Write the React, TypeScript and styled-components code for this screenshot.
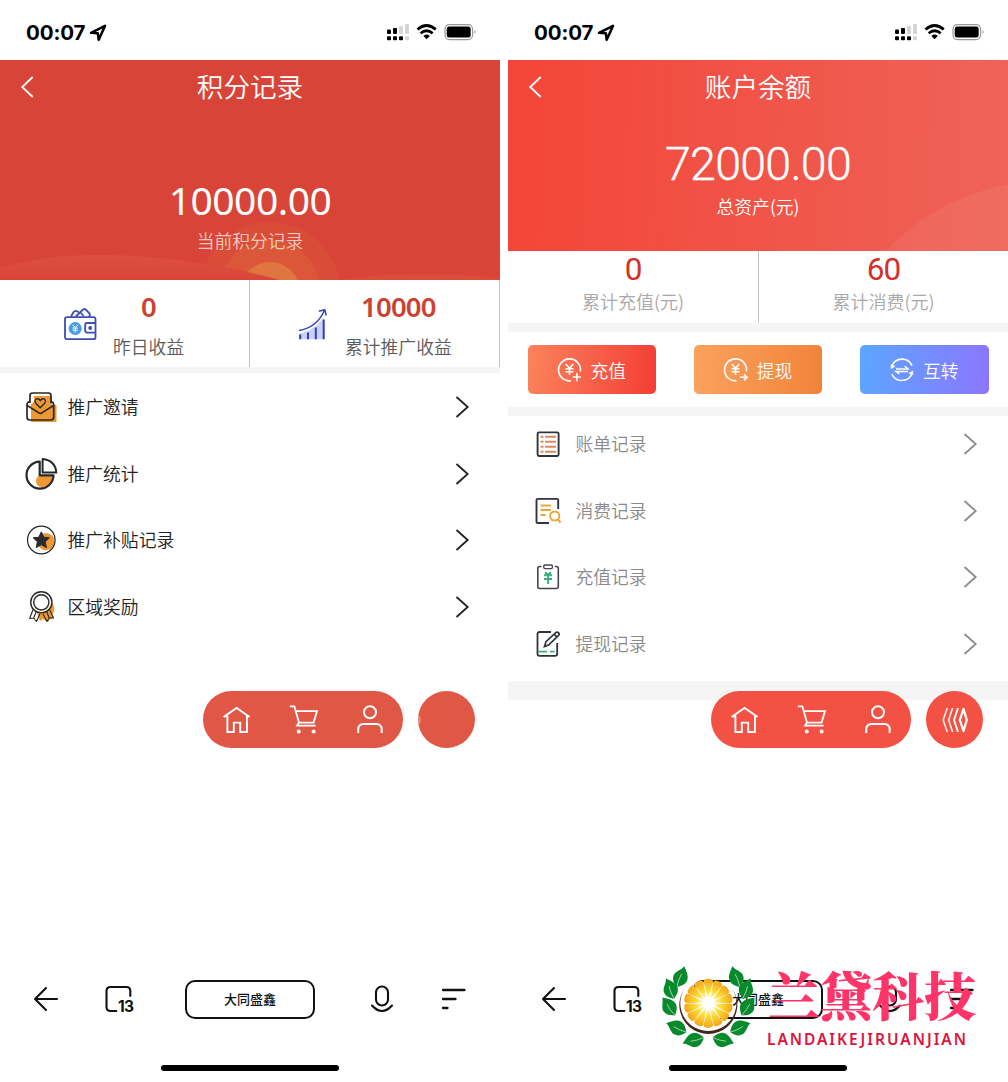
import React from "react";
import styled, { createGlobalStyle } from "styled-components";

const GlobalStyle = createGlobalStyle`
  * { box-sizing: border-box; }
  body {
    margin: 0;
    background: #fff;
    font-family: "Noto Sans CJK SC", "Liberation Sans", sans-serif;
  }
  svg { display: block; flex: none; }
`;

const Stage = styled.main`
  display: grid;
  grid-template-columns: 500px 500px;
  column-gap: 8px;
  width: 1008px;
  height: 1082px;
  overflow: hidden;
  background: #fff;
`;

const Phone = styled.section`
  position: relative;
  display: flex;
  flex-direction: column;
  height: 1082px;
`;

/* ---------- status bar ---------- */

const StatusBar = styled.div`
  display: flex;
  align-items: center;
  height: 60px;
  padding: 5px 23px 0 26px;
`;

const Clock = styled.span`
  font: 700 20.5px/24px Inter, "Liberation Sans", sans-serif;
  width: 60px;
  margin-right: 3px;
  letter-spacing: -0.1px;
  color: #000;
`;

const Spacer = styled.span`
  flex: 1;
`;

/* ---------- hero ---------- */

const Hero = styled.header<{ $h: number; $bg: string }>`
  position: relative;
  display: flex;
  flex-direction: column;
  align-items: center;
  height: ${(p) => p.$h}px;
  background: ${(p) => p.$bg};
  color: #fff;
`;

const HeroArt = styled.svg`
  position: absolute;
  inset: 0;
`;

const TitleRow = styled.div`
  position: relative;
  display: grid;
  grid-template-columns: 60px 1fr 60px;
  align-items: center;
  width: 100%;
  height: 54px;
`;

const Title = styled.h1`
  margin: 0;
  padding-bottom: 2px;
  text-align: center;
  font-size: 26.6px;
  line-height: 38px;
  font-weight: 350;
`;

const BackSlot = styled.span`
  padding-left: 20px;
`;

const Amount = styled.div<{ $top: number; $size: number; $spacing: number; $font: string; $weight: number; $stroke?: number }>`
  position: relative;
  margin-top: ${(p) => p.$top}px;
  font-family: ${(p) => p.$font};
  font-weight: ${(p) => p.$weight};
  font-size: ${(p) => p.$size}px;
  line-height: 50px;
  letter-spacing: ${(p) => p.$spacing}px;
  -webkit-text-stroke: ${(p) => p.$stroke ?? 0}px #fff;
`;

const AmountLabel = styled.div<{ $top: number; $dim?: boolean }>`
  position: relative;
  margin-top: ${(p) => p.$top}px;
  font-size: 17.8px;
  line-height: 26px;
  font-weight: 350;
  color: ${(p) => (p.$dim ? "#f6c9be" : "#fff")};
`;

/* ---------- stats ---------- */

const Stats = styled.div<{ $h: number }>`
  display: grid;
  grid-template-columns: 1fr 1fr;
  height: ${(p) => p.$h}px;
`;

const IconStat = styled.div<{ $pad: number; $gap: number }>`
  display: flex;
  align-items: flex-start;
  gap: ${(p) => p.$gap}px;
  padding-left: ${(p) => p.$pad}px;
  border-right: 1px solid #c4c4c4;
  svg { margin-top: 26px; }
`;

const StatText = styled.div`
  display: flex;
  flex-direction: column;
  align-items: center;
  padding-top: 11px;
`;

const StatValue = styled.strong`
  font: 600 27.5px/32px "Noto Sans", sans-serif;
  letter-spacing: -0.8px;
  color: #cb4234;
`;

const StatLabel = styled.span`
  margin-top: 10px;
  font-size: 17.8px;
  line-height: 26px;
  font-weight: 350;
  color: #5a5a5a;
`;

const PlainStat = styled.div`
  display: flex;
  flex-direction: column;
  align-items: center;
  padding-top: 4px;
  & + & { border-left: 1px solid #c8c8c8; }
`;

const PlainValue = styled.span`
  font: 400 31.5px/30px Roboto, sans-serif;
  letter-spacing: -1px;
  color: #d3302a;
`;

const PlainLabel = styled.span`
  margin-top: 3px;
  font-size: 18px;
  line-height: 26px;
  font-weight: 350;
  color: #a8a8a8;
`;

const Band = styled.div<{ $h: number }>`
  height: ${(p) => p.$h}px;
  background: #f5f5f5;
`;

/* ---------- action buttons ---------- */

const Actions = styled.div`
  display: flex;
  justify-content: space-between;
  height: 75px;
  padding: 13px 19.5px 13px 19.5px;
`;

const ActionButton = styled.button<{ $from: string; $to: string }>`
  display: flex;
  align-items: center;
  gap: 8px;
  width: 128.5px;
  height: 49px;
  padding: 0 0 0 29px;
  border: 0;
  border-radius: 5px;
  background: linear-gradient(95deg, ${(p) => p.$from}, ${(p) => p.$to});
  color: #fff;
  font: 350 17.8px/26px "Noto Sans CJK SC", sans-serif;
  white-space: nowrap;
`;

/* ---------- menu list ---------- */

const Menu = styled.ul<{ $top: number; $bottom: number }>`
  display: flex;
  flex-direction: column;
  gap: 10.5px;
  margin: 0;
  padding: ${(p) => p.$top}px 30px ${(p) => p.$bottom}px 24px;
  list-style: none;
`;

const MenuItem = styled.li<{ $muted?: boolean }>`
  display: grid;
  grid-template-columns: 43.5px 1fr auto;
  align-items: center;
  height: 56px;
  color: ${(p) => (p.$muted ? "#8a8a8a" : "#222")};
`;

const MenuLabel = styled.span`
  padding-bottom: 2px;
  font-size: 17.8px;
  line-height: 26px;
  font-weight: 350;
`;

/* ---------- floating bar ---------- */

const FloatBar = styled.nav`
  position: absolute;
  top: 691px;
  right: 25px;
  display: flex;
  gap: 15px;
`;

const Pill = styled.div<{ $bg: string }>`
  display: flex;
  align-items: center;
  justify-content: space-between;
  width: 200px;
  height: 57px;
  padding: 0 18px 0 19px;
  border-radius: 29px;
  background: ${(p) => p.$bg};
`;

const Bubble = styled.div<{ $bg: string }>`
  position: relative;
  display: flex;
  align-items: center;
  justify-content: center;
  width: 57px;
  height: 57px;
  border-radius: 50%;
  overflow: hidden;
  background: ${(p) => p.$bg};
`;

const BubbleGlint = styled.i`
  position: absolute;
  left: -7px;
  top: 23px;
  width: 10px;
  height: 12px;
  border-radius: 50%;
  background: rgba(255, 255, 255, 0.28);
`;

/* ---------- browser bar ---------- */

const BrowserBar = styled.footer`
  display: flex;
  align-items: center;
  height: 40px;
  margin-top: auto;
  padding-left: 32px;
`;

const AddressBox = styled.div`
  width: 130px;
  height: 39px;
  margin: 0 55px 0 52px;
  border: 2px solid #111;
  border-radius: 10px;
  text-align: center;
  font-size: 13px;
  line-height: 34px;
  font-weight: 500;
  color: #111;
`;

const TabsButton = styled.div`
  position: relative;
  width: 28px;
  height: 28px;
  margin-left: 45px;
`;

const TabCount = styled.span`
  position: absolute;
  left: 13px;
  top: 13.5px;
  font: 700 15.5px/16px Inter, sans-serif;
  letter-spacing: -0.6px;
  color: #111;
`;

const MenuLines = styled.svg`
  margin-left: 47px;
`;

const HomeIndicator = styled.div`
  width: 178px;
  height: 6px;
  margin: 46px auto 11px;
  border-radius: 3px;
  background: #000;
`;

/* ---------- company mark ---------- */

const Mark = styled.div`
  position: absolute;
  left: 147px;
  top: 960px;
  display: flex;
`;

const MarkText = styled.div`
  display: flex;
  flex-direction: column;
  margin-left: 8px;
  white-space: nowrap;
`;

const MarkName = styled.span`
  margin-top: -1px;
  font-family: "Noto Serif CJK SC", "Noto Sans CJK SC", serif;
  font-weight: 900;
  font-size: 52px;
  line-height: 70px;
  color: #ff3468;
`;

const MarkLatin = styled.span`
  margin: 0 0 0 -1px;
  font: 600 15.5px/20px "Noto Sans", sans-serif;
  letter-spacing: 1.95px;
  color: #dc143c;
`;

/* ---------- drawings ---------- */

const LocationArrow = () => (
  <svg width="18" height="18" viewBox="0 0 18 18" fill="none">
    <path d="M2 8.8 L16 1.9 L9.7 15.8 L8.8 9.2 Z" stroke="#000" strokeWidth="2.5" strokeLinejoin="round" />
  </svg>
);

const StatusIcons = () => (
  <svg width="90" height="18" viewBox="0 0 90 18">
    <g fill="#000">
      <rect x="0" y="5.5" width="4" height="4.5" rx="1" />
      <rect x="6" y="4" width="4" height="6" rx="1" />
      <rect x="0" y="12.2" width="4" height="4" rx="1" />
      <rect x="6" y="12.2" width="4" height="4" rx="1" />
      <rect x="12" y="12.2" width="4" height="4" rx="1" />
    </g>
    <g fill="#d4d4d4">
      <rect x="12" y="2" width="4" height="8" rx="1" />
      <rect x="18" y="0" width="4" height="10" rx="1" />
      <rect x="18" y="12.2" width="4" height="4" rx="1" />
    </g>
    <g fill="none" stroke="#000" strokeWidth="2.7">
      <path d="M30.5 5.4 Q39.5 -2.4 48.8 5.4" />
      <path d="M33.6 9.3 Q39.6 4.2 45.7 9.3" />
    </g>
    <path d="M36.4 12 Q39.6 9.2 42.8 12 L39.6 15.2 Z" fill="#000" />
    <rect x="58" y="0.6" width="27.6" height="15" rx="4.5" fill="#fff" stroke="#999" strokeWidth="1.2" />
    <rect x="59.7" y="2.6" width="24" height="11" rx="2.5" fill="#000" />
    <path d="M87.5 6 Q89.8 8 87.5 10 Z" fill="#999" />
  </svg>
);

const BackChevron = () => (
  <svg width="14" height="22" viewBox="0 0 14 22" fill="none">
    <path d="M12.7 1 L2.2 11 L12.7 21" stroke="#fff" strokeWidth="1.8" />
  </svg>
);

const RowChevron = ({ color }: { color: string }) => (
  <svg width="15" height="22" viewBox="0 0 15 22" fill="none">
    <path d="M1.5 1 L12.7 11 L1.5 21" stroke={color} strokeWidth="1.8" />
  </svg>
);

const Wallet = () => (
  <svg width="34" height="35" viewBox="0 0 34 35" fill="none" stroke="#3c4db4" strokeWidth="1.8" strokeLinejoin="round">
    <path d="M8 10.5 L10.6 6 Q12 4.2 14 5.2 L15.8 6.2 M12.8 10.5 L20.2 3.3 Q21.4 2.3 22.6 3.5 L26.3 7.2 Q27.6 8.8 26 10.8 M17.5 6.5 L20.7 10" />
    <rect x="2" y="11.2" width="30.5" height="22" rx="2" />
    <path d="M32.5 17 H24 Q22.2 17 22.2 19 V24.6 Q22.2 26.6 24 26.6 H32.5" />
    <circle cx="27.2" cy="22" r="1" fill="#3c4db4" />
    <circle cx="12.2" cy="22.5" r="6.5" fill="#459be8" stroke="none" />
    <path d="M9.5 18.7 L12.2 21.8 L14.9 18.7 M12.2 21.8 V26.5 M9.5 22.1 H14.9 M9.5 24.2 H14.9" stroke="#fff" strokeWidth="1" />
  </svg>
);

const Growth = () => (
  <svg width="30" height="35" viewBox="0 0 30 35" fill="none">
    <path d="M1 28 L10 25 L18 20 L26 12 V33.2 H1 Z" fill="#cbd1fa" />
    <path d="M2.2 28.5 V33.2 M10 26.5 V33.2 M17.8 21.5 V33.2 M25.7 13.5 V33.2" stroke="#2d3ec0" strokeWidth="2" />
    <path d="M.8 24.5 Q19 21.5 26.5 4.2 M20.8 5.2 L26.8 3.7 L28.2 9.5" stroke="#3347c6" strokeWidth="1.5" />
  </svg>
);

const Invite = () => (
  <svg width="34" height="34" viewBox="0 0 34 34" fill="none" stroke="#282828" strokeWidth="1.7" strokeLinejoin="round">
    <path d="M10 6 H28 V15 H32.5 V32 H7 V14 L10 12 Z" fill="#ee9831" stroke="none" />
    <path d="M6 13 V5.5 Q6 3 8.5 3 H24.5 Q27 3 27 5.5 V13" />
    <path d="M6 11.5 Q3 12 3 14.7 V27 Q3 30 6 30 H26.8 Q29.7 30 29.7 27 V14.7 Q29.7 12 27 11.5 M3.2 15.5 L14.5 22.6 Q16.4 24 18.2 22.6 L29.5 15.5" />
    <path d="M16.2 17.8 L11.8 13.2 Q10 10.2 12.6 8.9 Q15 8.2 16.2 10.8 Q17.6 8.2 20 8.9 Q22.5 10.2 20.7 13.2 Z" strokeWidth="1.4" />
  </svg>
);

const Pie = () => (
  <svg width="34" height="34" viewBox="0 0 34 34" fill="none" stroke="#282828" strokeLinejoin="round">
    <path d="M15.5 18.5 H29 Q28.5 28.5 18 30.5 Q12 29 12 24 Q12 20 15.5 18.5 Z" fill="#ee9831" stroke="none" />
    <path d="M15.7 4.6 A13.5 13.5 0 1 0 29.5 18.3 H15.7 Z" strokeWidth="2.2" />
    <path d="M18.6 2 V15.6 H32.3 Q31.5 3.6 18.6 2 Z" strokeWidth="2" />
  </svg>
);

const StarCoin = () => (
  <svg width="34" height="34" viewBox="0 0 34 34" fill="none">
    <circle cx="22" cy="18.6" r="8.6" fill="#ee9831" />
    <circle cx="17.3" cy="17" r="13.8" stroke="#282828" strokeWidth="1.2" />
    <path d="M17.3 8.8 L19.8 14.2 L25.4 14.8 L21.2 18.8 L22.4 24.6 L17.3 21.7 L12.2 24.6 L13.4 18.8 L9.2 14.8 L14.8 14.2 Z" fill="#292b30" stroke="#292b30" strokeLinejoin="round" />
  </svg>
);

const Medal = () => (
  <svg width="34" height="34" viewBox="0 0 34 34" fill="none" stroke="#282828" strokeWidth="1.4" strokeLinejoin="round">
    <path d="M12 20 A9.2 9.2 0 1 1 28 25 L30 28 L26 29 L24 32 L19 29 L16 31 Z" fill="#ee9831" stroke="none" />
    <circle cx="17.3" cy="12.3" r="10.6" fill="#fff" />
    <path d="M10.3 14.5 A8.1 8.1 0 0 0 25 15 Q25 19.5 17 21 Q11.5 19 10.3 14.5 Z" fill="#ee9831" stroke="none" />
    <circle cx="17.3" cy="12.3" r="7.6" />
    <path d="M9.1 19.5 L5.6 28.5 L9.7 28 L12.5 31.5 L15.8 24 M25.5 19.5 L29.5 28 L25.3 28 L23 31.5 L19 24 M9.7 28 L12 22 M25.3 28 L22.8 22" strokeWidth="1.1" />
  </svg>
);

const Bill = () => (
  <svg width="34" height="34" viewBox="0 0 34 34" fill="none">
    <rect x="5.6" y="5.4" width="21" height="23.6" rx="1.4" stroke="#30343c" strokeWidth="1.9" />
    <path d="M8.5 9.8 H11.5 M8.5 14.7 H11.5 M8.5 19.8 H11.5 M8.5 24.7 H11.5 M13 9.8 H24 M13 14.7 H24 M13 19.8 H24 M13 24.7 H24" stroke="#df875f" strokeWidth="2" />
  </svg>
);

const SearchBill = () => (
  <svg width="34" height="34" viewBox="0 0 34 34" fill="none">
    <path d="M26.2 15 V6 Q26.2 4.9 25 4.9 H5.7 Q4.5 4.9 4.5 6 V28 Q4.5 29 5.7 29 H17" stroke="#30343c" strokeWidth="1.9" />
    <path d="M8.5 11.5 H19 M8.5 16 H19 M8.5 21 H13.7 M26 25.5 L28.5 28.5" stroke="#e8ab3b" strokeWidth="2" />
    <circle cx="22.7" cy="22" r="4.6" stroke="#e8ab3b" strokeWidth="2" />
  </svg>
);

const Recharge = () => (
  <svg width="34" height="34" viewBox="0 0 34 34" fill="none">
    <path d="M9.5 6.5 H7.7 Q5.8 6.5 5.8 8.5 V26.5 Q5.8 28.5 7.7 28.5 H24.4 Q26.3 28.5 26.3 26.5 V8.5 Q26.3 6.5 24.4 6.5 H22.8" stroke="#42464e" strokeWidth="1.6" />
    <rect x="11.8" y="5" width="8.6" height="3.6" rx="1" stroke="#42464e" strokeWidth="1.4" />
    <path d="M13.2 12.2 L16.1 15 L19 12.2 M12 15.2 H20 M12 19 H20 M16.1 13 V24" stroke="#3caf7c" strokeWidth="1.9" />
  </svg>
);

const Withdraw = () => (
  <svg width="34" height="34" viewBox="0 0 34 34" fill="none">
    <path d="M19 5 H7.5 Q5.5 5 5.5 7 V26.8 Q5.5 28.8 7.5 28.8 H23 Q25.2 28.8 25.2 26.8 V16" stroke="#30343c" strokeWidth="1.8" />
    <path d="M12.5 19.5 L14 14.6 L23.7 5.7 Q25.4 4.6 26.6 5.9 Q27.8 7.2 26.4 8.6 L16.8 17.8 Z M22 7.2 L25 10.1" stroke="#30343c" strokeWidth="1.7" />
    <path d="M6.5 24.6 H15 M18 24.6 H22.5" stroke="#3caf7c" strokeWidth="1.7" />
  </svg>
);

const YenPlus = () => (
  <svg width="26" height="26" viewBox="0 0 26 26" fill="none" stroke="#fff" strokeWidth="1.6">
    <path d="M14 23.8 A11 11 0 1 1 23.4 14.5 M15.8 20 H24 M19.9 16 V24.2" />
    <path d="M8.7 7 L12.5 11.3 L16.3 7 M12.5 11.3 V18 M8.5 11.8 H16.5 M8.5 14.8 H16.5" />
  </svg>
);

const YenArrow = () => (
  <svg width="26" height="26" viewBox="0 0 26 26" fill="none" stroke="#fff" strokeWidth="1.6">
    <path d="M13.5 23.8 A11 11 0 1 1 23.4 14.5 M17 20.3 H24 M21 17.2 L24.2 20.3 L21 23.4" />
    <path d="M8.7 7 L12.5 11.3 L16.3 7 M12.5 11.3 V18 M8.5 11.8 H16.5 M8.5 14.8 H16.5" />
  </svg>
);

const Swap = () => (
  <svg width="26" height="26" viewBox="0 0 26 26" fill="none" stroke="#fff" strokeWidth="1.6">
    <path d="M2.8 9 A11 11 0 0 1 23 8.6 M23 16.8 A11 11 0 0 1 2.8 17" />
    <path d="M2 11.6 L2.2 7.6 L6 9.4 Z M24 14 L23.6 18 L20 16.2 Z" fill="#fff" strokeWidth=".6" />
    <path d="M7 12 H19 L15.6 9.2 M19 14.4 H7 L10.4 17" strokeWidth="1.5" />
  </svg>
);

const HomeIcon = () => (
  <svg width="30" height="30" viewBox="0 0 30 30" fill="none" stroke="#fff" strokeWidth="1.9">
    <path d="M1.6 12 L14.6 2.9 L27.6 12 M2 11.4 H5.4 V27 H11.8 V17.6 H18.2 V27 H24.9 V11.4 H27.5" />
  </svg>
);

const CartIcon = () => (
  <svg width="30" height="30" viewBox="0 0 30 30" fill="none" stroke="#fff" strokeWidth="1.8">
    <path d="M.8 1.4 H5.4 L10 17.6 H24.6 L28 6.1 H6.8 M10 17.6 L8 20.7 H26.6" />
    <circle cx="9.7" cy="26.5" r="2" fill="#fff" stroke="none" />
    <circle cx="24.6" cy="26.5" r="2" fill="#fff" stroke="none" />
  </svg>
);

const UserIcon = () => (
  <svg width="30" height="30" viewBox="0 0 30 30" fill="none" stroke="#fff" strokeWidth="2">
    <circle cx="15" cy="7.2" r="6" />
    <path d="M3.2 28 V24.5 Q3.2 18.9 8.7 18.9 H21.2 Q26.7 18.9 26.7 24.5 V28" />
  </svg>
);

const Ripple = () => (
  <svg width="28" height="26" viewBox="0 0 28 26" fill="none" stroke="#fff" strokeLinejoin="round">
    <path d="M6.3 1 L2.2 13 L6.3 25 M11.6 1 L7.6 13 L11.6 25" strokeWidth="1.7" opacity=".85" />
    <path d="M17 1 L13 13 L17 25" strokeWidth="1.9" />
    <path d="M22.5 2 L18.8 13 L22.5 24 L25.8 13 Z" strokeWidth="2.3" />
  </svg>
);

const Orb = () => {
  const petals = Array.from({ length: 14 }, (_, i) => (i * 360) / 14 + 12.86);
  const leaves: [number, number, number][] = [
    [76, 52, 20],
    [46, 88, -22],
    [42, 141, -36],
    [66, 204, -66],
    [117, 241, -106],
  ];
  const leaf = ([x, y, a]: [number, number, number], i: number) => (
    <g key={i} transform={`translate(${x} ${y}) rotate(${a}) scale(1.16 1.04)`}>
      <path d="M0 -34 C8 -23 21 -12 19 4 C17 17 8 23 0 30 C-10 22 -19 14 -18 0 C-17 -13 -4 -20 0 -34 Z" fill="#078a2b" />
      <path d="M0 -10 Q-3 8 0 30" stroke="#fff" strokeWidth="1.5" fill="none" />
    </g>
  );
  return (
    <svg width="105" height="95" viewBox="0 0 315 285">
      <defs>
        <radialGradient id="citrus" gradientUnits="userSpaceOnUse" cx="160" cy="130" r="76">
          <stop offset=".25" stopColor="#fff6b0" />
          <stop offset=".5" stopColor="#fddc38" />
          <stop offset="1" stopColor="#f3a015" />
        </radialGradient>
      </defs>
      <path d="M88 86 A87 87 0 1 0 232 86 A84 84 0 1 1 88 86 Z" fill="#46251a" />
      {petals.map((a) => (
        <path key={a} transform={`rotate(${a} 160 130)`} d="M160 130 L156.5 72 L163.5 72 Z" fill="#fff" />
      ))}
      {petals.map((a) => (
        <path key={a} transform={`rotate(${a + 12.86} 160 130)`} d="M160 118 L146 67 Q145 60 151 58 Q160 55 169 58 Q175 60 174 67 Z" fill="url(#citrus)" />
      ))}
      <circle cx="160" cy="130" r="20" fill="#fff" />
      <g>{leaves.map(leaf)}</g>
      <g transform="translate(320 0) scale(-1 1)">{leaves.map(leaf)}</g>
    </svg>
  );
};

/* ---------- shared blocks ---------- */

const TopStatus = () => (
  <StatusBar>
    <Clock>00:07</Clock>
    <LocationArrow />
    <Spacer />
    <StatusIcons />
  </StatusBar>
);

const PageTitle = ({ children }: { children: React.ReactNode }) => (
  <TitleRow>
    <BackSlot>
      <BackChevron />
    </BackSlot>
    <Title>{children}</Title>
  </TitleRow>
);

const Floating = ({ color, children }: { color: string; children?: React.ReactNode }) => (
  <FloatBar>
    <Pill $bg={color}>
      <HomeIcon />
      <CartIcon />
      <UserIcon />
    </Pill>
    <Bubble $bg={color}>{children}</Bubble>
  </FloatBar>
);

const BottomBar = () => (
  <>
    <BrowserBar>
      <svg width="28" height="28" viewBox="0 0 28 28" fill="none" stroke="#111" strokeWidth="2.1" strokeLinecap="round" strokeLinejoin="round">
        <path d="M14 3 L3 14 L14 25 M3 14 H25" />
      </svg>
      <TabsButton>
        <svg width="28" height="28" viewBox="0 0 28 28" fill="none" stroke="#111" strokeWidth="2.1" strokeLinecap="round">
          <path d="M11.3 26 H5.5 Q1.5 26 1.5 22 V6 Q1.5 2 5.5 2 H21.3 Q25.3 2 25.3 6 V11" />
        </svg>
        <TabCount>13</TabCount>
      </TabsButton>
      <AddressBox>大同盛鑫</AddressBox>
      <svg width="24" height="28" viewBox="0 0 24 28" fill="none" stroke="#111" strokeWidth="2.1" strokeLinecap="round">
        <rect x="6" y="1.5" width="12" height="19" rx="6" />
        <path d="M2 20.5 Q12 31.5 22 20.5" />
      </svg>
      <MenuLines width="26" height="28" viewBox="0 0 26 28" fill="none" stroke="#111" strokeWidth="2.3" strokeLinecap="round">
        <path d="M2 5 H23.5 M2 14 H14.5 M2 23 H6.5" />
      </MenuLines>
    </BrowserBar>
    <HomeIndicator />
  </>
);

const pointsMenu = [
  { label: "推广邀请", icon: <Invite /> },
  { label: "推广统计", icon: <Pie /> },
  { label: "推广补贴记录", icon: <StarCoin /> },
  { label: "区域奖励", icon: <Medal /> },
];

const balanceMenu = [
  { label: "账单记录", icon: <Bill /> },
  { label: "消费记录", icon: <SearchBill /> },
  { label: "充值记录", icon: <Recharge /> },
  { label: "提现记录", icon: <Withdraw /> },
];

const PointsPage = () => (
  <Phone>
    <TopStatus />
    <Hero $h={220} $bg="#d84538">
      <HeroArt width="500" height="220" viewBox="0 0 500 220">
        <defs>
          <linearGradient id="hill" x1="0" y1="0" x2="0" y2="1">
            <stop offset="0" stopColor="#de4f40" />
            <stop offset="1" stopColor="#d94639" />
          </linearGradient>
        </defs>
        <circle cx="270" cy="232" r="70" fill="#d94d38" />
        <circle cx="270" cy="230" r="50" fill="#dc573a" />
        <circle cx="270" cy="232" r="30" fill="#e0753f" />
        <path d="M0 208 Q45 194 110 195 Q200 198 280 220 H0 Z" fill="url(#hill)" />
        <path d="M340 220 Q400 209 500 218 V220 Z" fill="#dc4c3b" />
      </HeroArt>
      <PageTitle>积分记录</PageTitle>
      <Amount $top={61} $size={39} $spacing={-0.5} $font={'"Noto Sans", sans-serif'} $weight={400}>10000.00</Amount>
      <AmountLabel $top={2} $dim>当前积分记录</AmountLabel>
    </Hero>
    <Stats $h={87}>
      <IconStat $pad={63} $gap={16}>
        <Wallet />
        <StatText>
          <StatValue>0</StatValue>
          <StatLabel>昨日收益</StatLabel>
        </StatText>
      </IconStat>
      <IconStat $pad={48} $gap={17}>
        <Growth />
        <StatText>
          <StatValue>10000</StatValue>
          <StatLabel>累计推广收益</StatLabel>
        </StatText>
      </IconStat>
    </Stats>
    <Band $h={6} />
    <Menu $top={6} $bottom={0}>
      {pointsMenu.map((m) => (
        <MenuItem key={m.label}>
          {m.icon}
          <MenuLabel>{m.label}</MenuLabel>
          <RowChevron color="#222" />
        </MenuItem>
      ))}
    </Menu>
    <BottomBar />
    <Floating color="#e15746">
      <BubbleGlint />
    </Floating>
  </Phone>
);

const BalancePage = () => (
  <Phone>
    <TopStatus />
    <Hero $h={191} $bg="linear-gradient(92deg, #f34538, #ef6358)">
      <HeroArt width="500" height="191" viewBox="0 0 500 191">
        <path d="M378 191 Q425 140 500 124 V191 Z" fill="#fff" opacity=".06" />
      </HeroArt>
      <PageTitle>账户余额</PageTitle>
      <Amount $top={25} $size={46.5} $spacing={-0.7} $font={"Roboto, sans-serif"} $weight={300} $stroke={0.4}>72000.00</Amount>
      <AmountLabel $top={4}>总资产(元)</AmountLabel>
    </Hero>
    <Stats $h={72}>
      <PlainStat>
        <PlainValue>0</PlainValue>
        <PlainLabel>累计充值(元)</PlainLabel>
      </PlainStat>
      <PlainStat>
        <PlainValue>60</PlainValue>
        <PlainLabel>累计消费(元)</PlainLabel>
      </PlainStat>
    </Stats>
    <Band $h={9} />
    <Actions>
      <ActionButton $from="#fb835b" $to="#f33e36"><YenPlus />充值</ActionButton>
      <ActionButton $from="#fba25e" $to="#f1833a"><YenArrow />提现</ActionButton>
      <ActionButton $from="#5ba6ff" $to="#8c76ff"><Swap />互转</ActionButton>
    </Actions>
    <Band $h={9} />
    <Menu $top={0} $bottom={9.5}>
      {balanceMenu.map((m) => (
        <MenuItem key={m.label} $muted>
          {m.icon}
          <MenuLabel>{m.label}</MenuLabel>
          <RowChevron color="#8c8c8c" />
        </MenuItem>
      ))}
    </Menu>
    <Band $h={19} />
    <BottomBar />
    <Floating color="#f25143">
      <Ripple />
    </Floating>
    <Mark>
      <Orb />
      <MarkText>
        <MarkName>兰黛科技</MarkName>
        <MarkLatin>LANDAIKEJIRUANJIAN</MarkLatin>
      </MarkText>
    </Mark>
  </Phone>
);

export default function App() {
  return (
    <>
      <GlobalStyle />
      <Stage>
        <PointsPage />
        <BalancePage />
      </Stage>
    </>
  );
}
